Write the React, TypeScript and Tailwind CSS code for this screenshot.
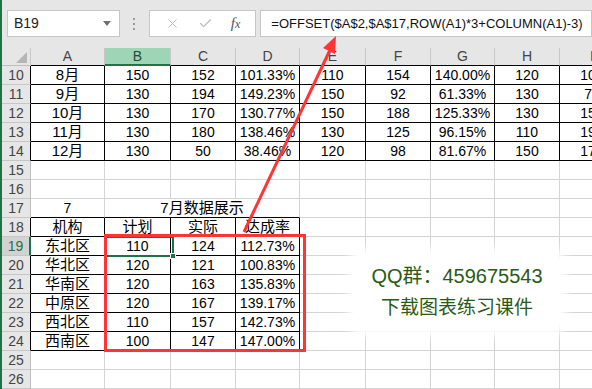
import { X, Check } from "lucide-react";

const LETTERS = ["A", "B", "C", "D", "E", "F", "G", "H", "I"];

// sheet contents, keyed by row number (columns A..I)
const DATA: Record<number, string[]> = {
  10: ["8月", "150", "152", "101.33%", "110", "154", "140.00%", "120", "105"],
  11: ["9月", "130", "194", "149.23%", "150", "92", "61.33%", "130", "78"],
  12: ["10月", "130", "170", "130.77%", "150", "188", "125.33%", "130", "156"],
  13: ["11月", "130", "180", "138.46%", "130", "125", "96.15%", "110", "190"],
  14: ["12月", "130", "50", "38.46%", "120", "98", "81.67%", "150", "170"],
  18: ["机构", "计划", "实际", "达成率"],
  19: ["东北区", "110", "124", "112.73%"],
  20: ["华北区", "120", "121", "100.83%"],
  21: ["华南区", "120", "163", "135.83%"],
  22: ["中原区", "120", "167", "139.17%"],
  23: ["西北区", "110", "157", "142.73%"],
  24: ["西南区", "100", "147", "147.00%"],
};

const ROWS = Array.from({ length: 17 }, (_, i) => i + 10);

const bordered = (r: number, c: number) =>
  (r >= 10 && r <= 14) || (r >= 18 && r <= 24 && c <= 3);

const isCjk = (s: string) => /[^\x00-\x7f]/.test(s);

function Cell({ r, c, text, span }: { r: number; c: number; text?: string; span?: boolean }) {
  const lastCol = span ? c + 2 : c;
  const right = bordered(r, lastCol) || bordered(r, lastCol + 1);
  const bottom = span
    ? bordered(r + 1, c)
    : bordered(r, c) || bordered(r + 1, c);
  return (
    <div
      className={`${span ? "col-span-3" : ""} flex items-center justify-center overflow-hidden whitespace-nowrap border-r border-b text-black ${
        right ? "border-r-black" : "border-r-[#d4d4d4]"
      } ${bottom ? "border-b-black" : "border-b-[#d4d4d4]"} ${
        text && isCjk(text) ? "text-[15px]" : "text-[14px]"
      }`}
    >
      {text}
    </div>
  );
}

export default function App() {
  return (
    <div
      className="relative w-[592px] h-[389px] overflow-hidden bg-white border-l-2 border-[#217346]"
      style={{ fontFamily: "'Liberation Sans', 'Noto Sans CJK SC', sans-serif" }}
    >
      {/* formula bar */}
      <div className="flex items-start h-[48px] pt-[10px] bg-[#e6e6e6]">
        <div className="ml-[5px] w-[115px] h-[27px] bg-white border border-[#c6c6c6] flex items-center justify-between pl-[6px] pr-[8px] text-[14px] text-[#222]">
          <span>B19</span>
          <span className="w-0 h-0 border-l-[4px] border-r-[4px] border-t-[5px] border-l-transparent border-r-transparent border-t-[#707070]" />
        </div>
        <div className="w-[30px] h-[27px] flex flex-col items-center justify-center gap-[3px]">
          <span className="w-[2px] h-[2px] bg-[#9a9a9a]" />
          <span className="w-[2px] h-[2px] bg-[#9a9a9a]" />
          <span className="w-[2px] h-[2px] bg-[#9a9a9a]" />
        </div>
        <div className="w-[110px] h-[27px] bg-white border border-[#c6c6c6] flex items-center justify-around px-[6px]">
          <X size={15} strokeWidth={1.6} color="#b8b8b8" />
          <Check size={15} strokeWidth={1.8} color="#b8b8b8" />
          <span className="text-[#555] italic text-[15px]" style={{ fontFamily: "'Liberation Serif', serif" }}>
            f<span className="text-[12px]">x</span>
          </span>
        </div>
        <div className="ml-[4px] w-[340px] h-[27px] bg-white border border-[#c6c6c6] flex items-center pl-[10px] text-[13px] text-[#111] whitespace-nowrap">
          =OFFSET($A$2,$A$17,ROW(A1)*3+COLUMN(A1)-3)
        </div>
      </div>

      {/* sheet grid */}
      <div className="grid grid-cols-[29px_74px_66px_65px_64px_66px_65px_64px_65px_65px] grid-rows-[18px_repeat(17,19px)]">
        <div className="relative bg-[#e6e6e6] border-r border-b border-r-[#c8c8c8] border-b-[#bdbdbd]">
          <svg className="absolute inset-0" width="29" height="18">
            <polygon points="14,15 25,15 25,4" fill="#b5b5b5" />
          </svg>
        </div>
        {LETTERS.map((l) =>
          l === "B" ? (
            <div key={l} className="flex items-center justify-center bg-[#9fd5b7] border-r border-r-[#c8c8c8] border-b-2 border-b-[#217346] text-[14px] text-[#1f4d33]">
              {l}
            </div>
          ) : (
            <div key={l} className="flex items-center justify-center bg-[#e6e6e6] border-r border-b border-r-[#c8c8c8] border-b-black text-[14px] text-[#444]">
              {l}
            </div>
          )
        )}

        {ROWS.map((r) => (
          <div key={r} className="contents">
            {r === 19 ? (
              <div className="flex items-center justify-center bg-[#d2d2d2] border-r-2 border-b border-r-[#217346] border-b-[#c6c6c6] text-[14px] text-[#217346]">
                {r}
              </div>
            ) : (
              <div
                className={`flex items-center justify-center bg-[#e6e6e6] border-r border-b border-b-[#c6c6c6] text-[14px] text-[#444] ${
                  bordered(r, 0) ? "border-r-black" : "border-r-[#bdbdbd]"
                }`}
              >
                {r}
              </div>
            )}
            {r === 17 ? (
              <>
                <Cell r={r} c={0} text="7" />
                <Cell r={r} c={1} text="7月数据展示" span />
                {[4, 5, 6, 7, 8].map((c) => (
                  <Cell key={c} r={r} c={c} />
                ))}
              </>
            ) : (
              LETTERS.map((_, c) => <Cell key={c} r={r} c={c} text={DATA[r]?.[c]} />)
            )}
          </div>
        ))}
      </div>

      {/* active cell B19 */}
      <div className="absolute left-[103px] top-[236px] w-[69px] h-[21px] border-2 border-[#217346]" />
      <div className="absolute left-[168px] top-[253px] w-[6px] h-[6px] bg-[#217346] border border-white" />

      {/* red highlight box */}
      <div className="absolute left-[102px] top-[234px] w-[202px] h-[118px] border-[3px] border-[#ff3535]" />

      {/* QQ note */}
      <div className="absolute left-[352px] top-[254px] w-[206px] h-[76px] bg-white rounded-lg shadow-[0_0_8px_6px_white] flex flex-col items-center justify-center gap-[10px] text-[#2a5a15]">
        <div className="text-[20px] leading-[22px]">QQ群：459675543</div>
        <div className="text-[19px] leading-[22px]">下载图表练习课件</div>
      </div>

      {/* arrow */}
      <svg className="absolute inset-0 pointer-events-none" width="592" height="389">
        <line x1="242" y1="232" x2="328" y2="50" stroke="#ff3535" strokeWidth="3" />
        <polygon points="334,36 333,54 321,48" fill="#ff3535" />
      </svg>
    </div>
  );
}
